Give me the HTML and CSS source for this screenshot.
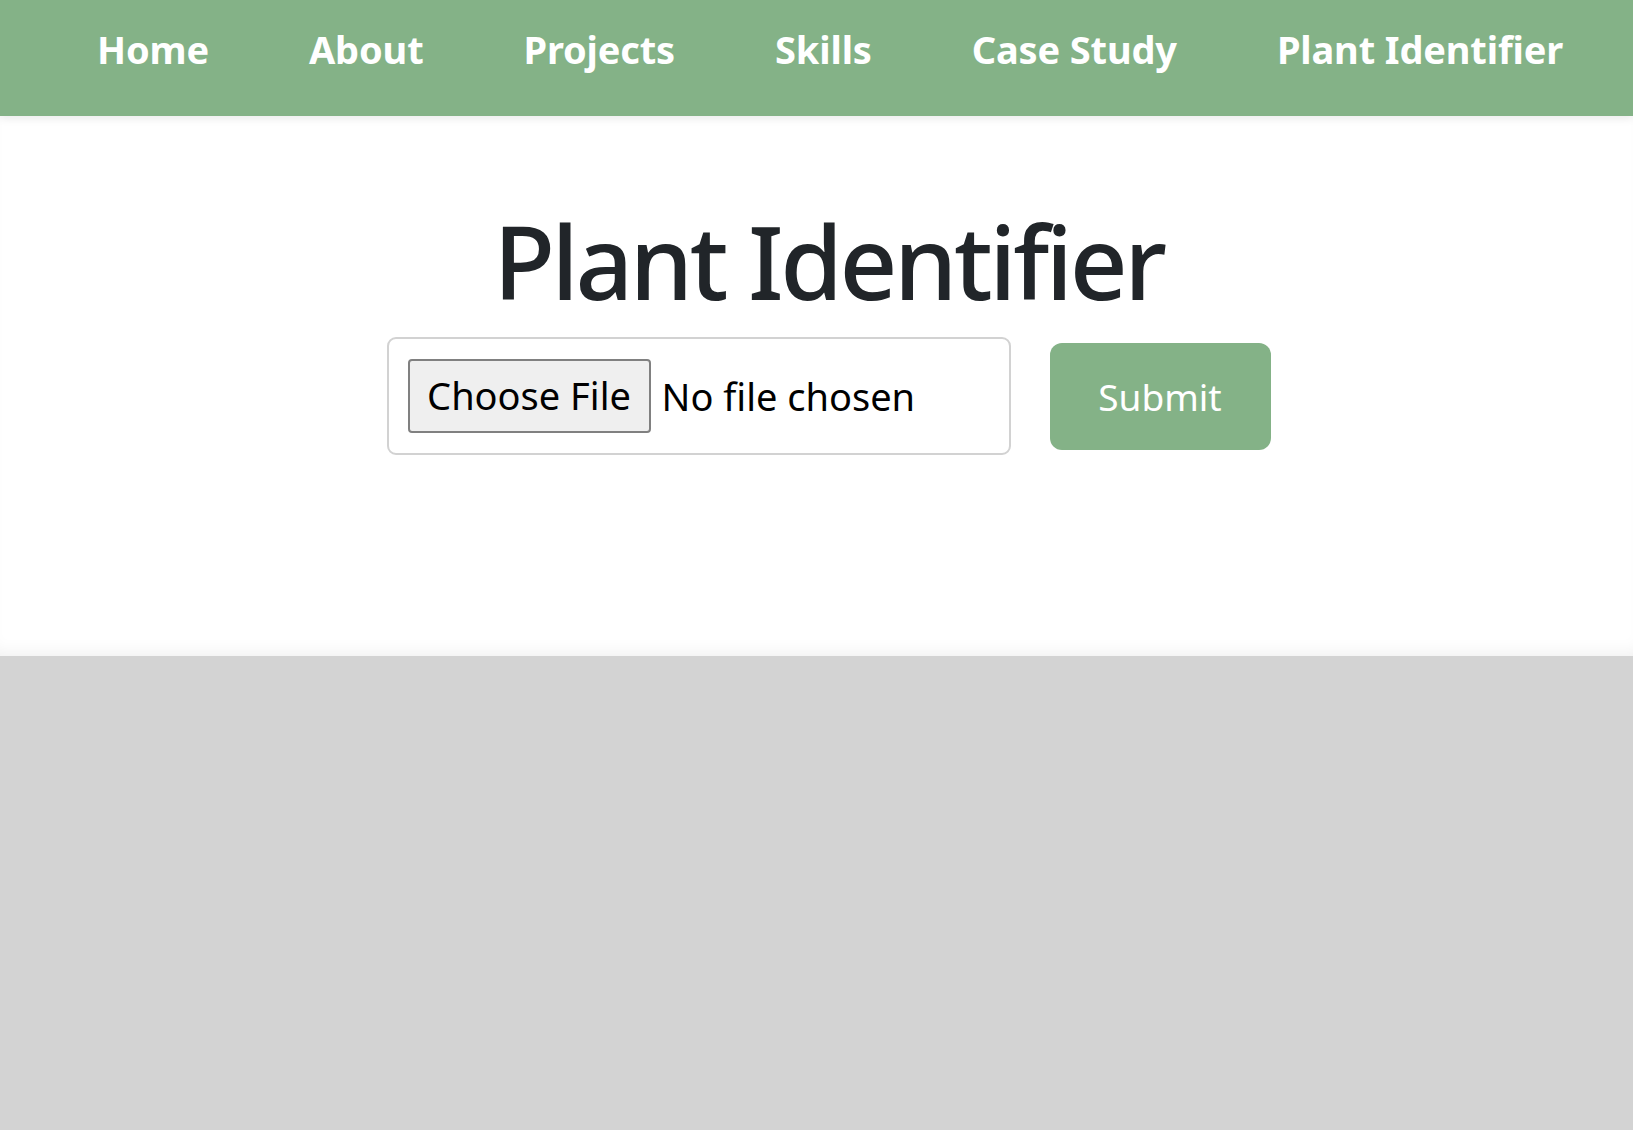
FILE: index.html
```html
<!DOCTYPE html>
<html lang="en">
<head>
<meta charset="utf-8">
<title>Plant Identifier</title>
<link rel="stylesheet" href="styles.css">
</head>
<body>
<header class="topbar">
  <nav class="nav">
    <a class="nav-link" href="#">Home</a>
    <a class="nav-link" href="#">About</a>
    <a class="nav-link" href="#">Projects</a>
    <a class="nav-link" href="#">Skills</a>
    <a class="nav-link" href="#">Case Study</a>
    <a class="nav-link" href="#">Plant Identifier</a>
  </nav>
</header>
<main class="content">
  <h1 class="title">Plant Identifier</h1>
  <form class="upload-form">
    <label class="file-box">
      <span class="file-button">Choose File</span>
      <span class="file-name">No file chosen</span>
    </label>
    <button class="submit" type="button">Submit</button>
  </form>
</main>
<footer class="footer"></footer>
</body>
</html>
```
FILE: styles.css
```css
html, body {
  margin: 0;
  padding: 0;
}
body {
  background: #d3d3d3;
  font-family: "Noto Sans", "Open Sans", sans-serif;
  color: #212529;
  min-height: 100vh;
}
.topbar {
  background: #84b287;
  height: 116px;
  box-shadow: 0 3px 8px rgba(0, 0, 0, 0.08);
  position: relative;
  z-index: 2;
}
.nav {
  display: flex;
  align-items: center;
  gap: 100px;
  height: 97px;
  padding-left: 97px;
}
.nav-link {
  color: #fff;
  text-decoration: none;
  font-weight: 700;
  font-size: 38px;
  letter-spacing: -0.15px;
}
.content {
  background: #fff;
  height: 540px;
  box-sizing: border-box;
  padding: 80px 0 0 24px;
  box-shadow: inset 0 -14px 18px -12px rgba(0, 0, 0, 0.07);
}
.title {
  margin: 0;
  text-align: center;
  font-size: 101px;
  font-weight: 500;
  line-height: 130px;
  letter-spacing: -3.4px;
}
.upload-form {
  display: flex;
  justify-content: center;
  align-items: center;
  gap: 39px;
  margin-top: 11px;
}
.file-box {
  width: 624px;
  height: 118px;
  box-sizing: border-box;
  border: 2px solid #d2d2d2;
  border-radius: 9px;
  padding: 0 19px;
  display: flex;
  align-items: center;
  gap: 11px;
  font-size: 38px;
  color: #000;
}
.file-button {
  width: 243px;
  height: 74px;
  box-sizing: border-box;
  background: #efefef;
  border: 2px solid #808080;
  border-radius: 4px;
  display: flex;
  align-items: center;
  justify-content: center;
  padding-bottom: 2px;
}
.submit {
  width: 221px;
  height: 107px;
  border: none;
  border-radius: 12px;
  background: #84b287;
  color: #fff;
  font-family: inherit;
  font-size: 37px;
  padding: 0;
}
.footer {
  height: 474px;
}
```
